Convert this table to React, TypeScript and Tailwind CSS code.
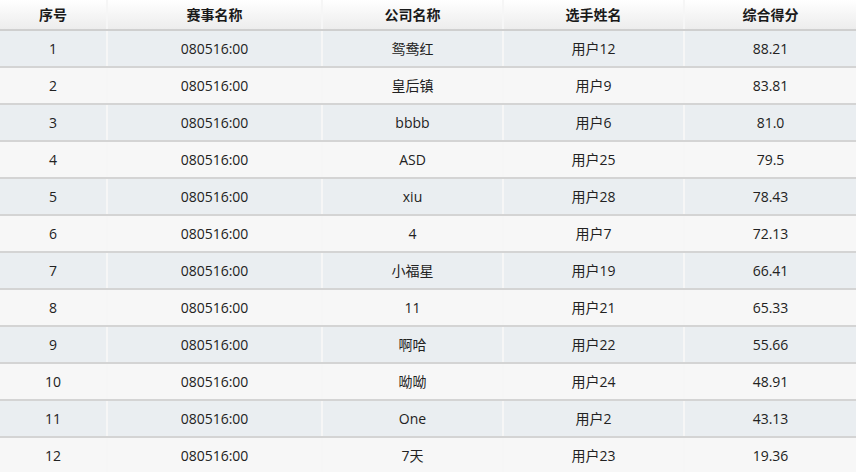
const rows = [
  { id: 1, match: '080516:00', company: '鸳鸯红', player: '用户12', score: '88.21' },
  { id: 2, match: '080516:00', company: '皇后镇', player: '用户9', score: '83.81' },
  { id: 3, match: '080516:00', company: 'bbbb', player: '用户6', score: '81.0' },
  { id: 4, match: '080516:00', company: 'ASD', player: '用户25', score: '79.5' },
  { id: 5, match: '080516:00', company: 'xiu', player: '用户28', score: '78.43' },
  { id: 6, match: '080516:00', company: '4', player: '用户7', score: '72.13' },
  { id: 7, match: '080516:00', company: '小福星', player: '用户19', score: '66.41' },
  { id: 8, match: '080516:00', company: '11', player: '用户21', score: '65.33' },
  { id: 9, match: '080516:00', company: '啊哈', player: '用户22', score: '55.66' },
  { id: 10, match: '080516:00', company: '呦呦', player: '用户24', score: '48.91' },
  { id: 11, match: '080516:00', company: 'One', player: '用户2', score: '43.13' },
  { id: 12, match: '080516:00', company: '7天', player: '用户23', score: '19.36' },
]

const headers = ['序号', '赛事名称', '公司名称', '选手姓名', '综合得分']

export default function App() {
  return (
    <div
      className="w-[856px] h-[472px] overflow-hidden bg-white text-[14px] text-[#222]"
      style={{ fontFamily: '"Open Sans", "Noto Sans CJK SC", sans-serif' }}
    >
      <table className="w-full table-fixed border-collapse">
        <colgroup>
          <col className="w-[107px]" />
          <col className="w-[215px]" />
          <col className="w-[181px]" />
          <col className="w-[181px]" />
          <col className="w-[172px]" />
        </colgroup>
        <thead>
          <tr className="bg-gradient-to-b from-white to-[#ececec]">
            {headers.map((h, i) => (
              <th
                key={h}
                className={
                  'h-[30px] p-0 text-center font-bold text-[14px] text-[#1a1a1a] border-b-2 border-b-[#cfcfcf] ' +
                  (i < 4 ? 'border-r-2 border-r-[#f6f6f6]' : '')
                }
              >
                {h}
              </th>
            ))}
          </tr>
        </thead>
        <tbody>
          {rows.map((r) => (
            <tr key={r.id} className={r.id % 2 === 1 ? 'bg-[#eaeef1]' : 'bg-[#f7f7f7]'}>
              {[r.id, r.match, r.company, r.player, r.score].map((v, i) => (
                <td
                  key={i}
                  className={
                    'h-[37px] p-0 text-center border-b-2 border-b-[#d4d4d4] ' +
                    (i < 4 ? 'border-r-2 border-r-[#f6f6f6]' : '')
                  }
                >
                  {v}
                </td>
              ))}
            </tr>
          ))}
        </tbody>
      </table>
    </div>
  )
}
